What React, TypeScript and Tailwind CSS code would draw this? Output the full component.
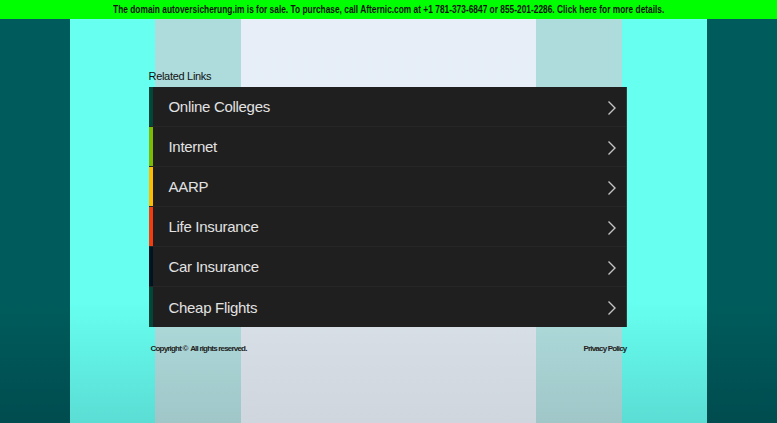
import React from "react";

const links = [
  { label: "Online Colleges", color: "bg-[#00473a]" },
  { label: "Internet", color: "bg-[#7cbb00]" },
  { label: "AARP", color: "bg-[#ffbb00]" },
  { label: "Life Insurance", color: "bg-[#f63c0f]" },
  { label: "Car Insurance", color: "bg-[#001320]" },
  { label: "Cheap Flights", color: "bg-[#00473a]" },
];

function Chevron() {
  return (
    <svg width="10" height="16" viewBox="0 0 10 16" className="shrink-0">
      <path d="M1.5 1.5 L8 8 L1.5 14.5" fill="none" stroke="#c4c4c4" strokeWidth="1.4" />
    </svg>
  );
}

export default function App() {
  return (
    <div className="w-[777px] h-[423px] overflow-hidden flex flex-col" style={{ fontFamily: '"Liberation Sans", Arial, sans-serif' }}>
      <div className="h-[19px] bg-[#00ff00] flex items-center justify-center text-[11px] font-bold text-[#111] shrink-0 overflow-hidden">
        <span className="inline-block whitespace-nowrap scale-x-[0.76]">
          The domain autoversicherung.im is for sale. To purchase, call Afternic.com at +1 781-373-6847 or 855-201-2286. Click here for more details.
        </span>
      </div>
      <div className="relative flex-1">
        <div className="absolute inset-0 flex">
          <div className="w-[70px] bg-gradient-to-b from-[#005c5c] via-[#005c5c] via-70% to-[#004c4f]" />
          <div className="w-[85px] bg-gradient-to-b from-[#66fff0] via-[#66fff0] via-70% to-[#5bddd4]" />
          <div className="w-[86px] bg-gradient-to-b from-[#aedcdc] via-[#aedcdc] via-70% to-[#a0c6c8]" />
          <div className="flex-1 bg-gradient-to-b from-[#e7eef8] via-[#e6eef8] via-30% to-[#cfd6dd]" />
          <div className="w-[86px] bg-gradient-to-b from-[#aedcdc] via-[#aedcdc] via-70% to-[#a0c6c8]" />
          <div className="w-[85px] bg-gradient-to-b from-[#66fff0] via-[#66fff0] via-70% to-[#5bddd4]" />
          <div className="w-[70px] bg-gradient-to-b from-[#005c5c] via-[#005c5c] via-70% to-[#004c4f]" />
        </div>
        <div className="relative w-[480px] mx-auto pt-[51px]">
          <div className="text-[11px] text-[#111] h-[17px] leading-[13px] tracking-[-0.3px]">Related Links</div>
          <div className="w-[478px] bg-[#1f1f1f] border-r border-[#3a3a3a]">
            {links.map((l, i) => (
              <div key={l.label} className={`flex h-[40px] ${i < links.length - 1 ? "border-b border-[#262626]" : ""}`}>
                <div className={`w-[4px] ${l.color}`} />
                <div className="flex-1 flex items-center justify-between pl-[16px] pr-[9px] pt-[2px]">
                  <span className="text-[15px] text-[#e2e2e2] tracking-[-0.3px]">{l.label}</span>
                  <Chevron />
                </div>
              </div>
            ))}
          </div>
          <div className="flex justify-between mt-[16px] pl-[2px] pr-[2px] text-[8px] font-bold text-[#222] tracking-[-0.8px]">
            <span>Copyright ©&nbsp; All rights reserved.</span>
            <span>Privacy Policy</span>
          </div>
        </div>
      </div>
    </div>
  );
}
